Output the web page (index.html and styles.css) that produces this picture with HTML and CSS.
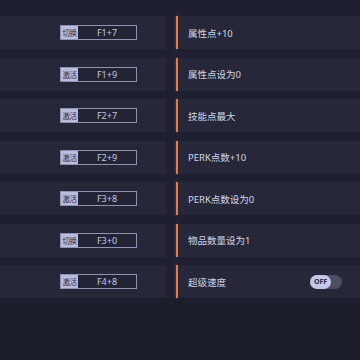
FILE: index.html
```html
<!DOCTYPE html>
<html>
<head>
<meta charset="utf-8">
<link rel="stylesheet" href="styles.css">
</head>
<body>
<div class="list">
  <div class="row">
    <div class="left"><div class="key"><span class="tag">切换</span><span class="combo">F1+7</span></div></div>
    <div class="divider"><span class="line"></span></div>
    <div class="right"><span class="label">属性点+10</span></div>
  </div>
  <div class="row">
    <div class="left"><div class="key"><span class="tag">激活</span><span class="combo">F1+9</span></div></div>
    <div class="divider"><span class="line"></span></div>
    <div class="right"><span class="label">属性点设为0</span></div>
  </div>
  <div class="row">
    <div class="left"><div class="key"><span class="tag">激活</span><span class="combo">F2+7</span></div></div>
    <div class="divider"><span class="line"></span></div>
    <div class="right"><span class="label">技能点最大</span></div>
  </div>
  <div class="row">
    <div class="left"><div class="key"><span class="tag">激活</span><span class="combo">F2+9</span></div></div>
    <div class="divider"><span class="line"></span></div>
    <div class="right"><span class="label">PERK点数+10</span></div>
  </div>
  <div class="row">
    <div class="left"><div class="key"><span class="tag">激活</span><span class="combo">F3+8</span></div></div>
    <div class="divider"><span class="line"></span></div>
    <div class="right"><span class="label">PERK点数设为0</span></div>
  </div>
  <div class="row">
    <div class="left"><div class="key"><span class="tag">切换</span><span class="combo">F3+0</span></div></div>
    <div class="divider"><span class="line"></span></div>
    <div class="right"><span class="label">物品数量设为1</span></div>
  </div>
  <div class="row">
    <div class="left"><div class="key"><span class="tag">激活</span><span class="combo">F4+8</span></div></div>
    <div class="divider"><span class="line"></span></div>
    <div class="right"><span class="label">超级速度</span><div class="toggle"><span class="knob">OFF</span></div></div>
  </div>
</div>
</body>
</html>
```
FILE: styles.css
```css
html, body {
  margin: 0;
  padding: 0;
  background: #1b1d2b;
  width: 360px;
  height: 360px;
  overflow: hidden;
  font-family: "Noto Sans", "Noto Sans CJK SC", sans-serif;
}
.list {
  padding-top: 16px;
  display: flex;
  flex-direction: column;
  gap: 8.5px;
  background: #1e2031;
}
.row {
  display: flex;
  height: 33px;
  background: #1f2132;
}
.left {
  width: 166px;
  background: #262839;
  display: flex;
  align-items: center;
  justify-content: flex-end;
  padding-right: 29px;
  box-sizing: border-box;
}
.key {
  display: flex;
  width: 77px;
  height: 15px;
  box-sizing: border-box;
  border: 1px solid #8e92b2;
  font-family: "Noto Sans CJK SC", sans-serif;
}
.tag {
  width: 17px;
  background: #b8bcdd;
  color: #2c2f48;
  display: flex;
  align-items: center;
  justify-content: center;
  font-size: 7.5px;
  letter-spacing: -0.5px;
  overflow: hidden;
  white-space: nowrap;
}
.combo {
  flex: 1;
  display: flex;
  align-items: center;
  justify-content: center;
  color: #c4c7dc;
  background: #222436;
  font-family: "Noto Sans", sans-serif;
  font-size: 9px;
}
.divider {
  width: 12px;
  display: flex;
  justify-content: flex-end;
}
.line {
  width: 2px;
  height: 100%;
  background: #e67a45;
  box-shadow: 0 0 2px rgba(230, 110, 60, 0.7);
}
.right {
  flex: 1;
  background: #262839;
  display: flex;
  align-items: center;
  padding-left: 10px;
  padding-right: 18px;
}
.label {
  flex: 1;
  color: #d2d5e4;
  font-family: "Noto Sans", "Noto Sans CJK SC", sans-serif;
  font-size: 9.5px;
}
.toggle {
  width: 32px;
  height: 14px;
  border-radius: 7px;
  background: #4b4e62;
  display: flex;
  align-items: center;
}
.knob {
  width: 21px;
  height: 14px;
  border-radius: 7px;
  background: #c4c7e6;
  color: #2a2d45;
  font-size: 7px;
  font-weight: bold;
  display: flex;
  align-items: center;
  justify-content: center;
}
```
